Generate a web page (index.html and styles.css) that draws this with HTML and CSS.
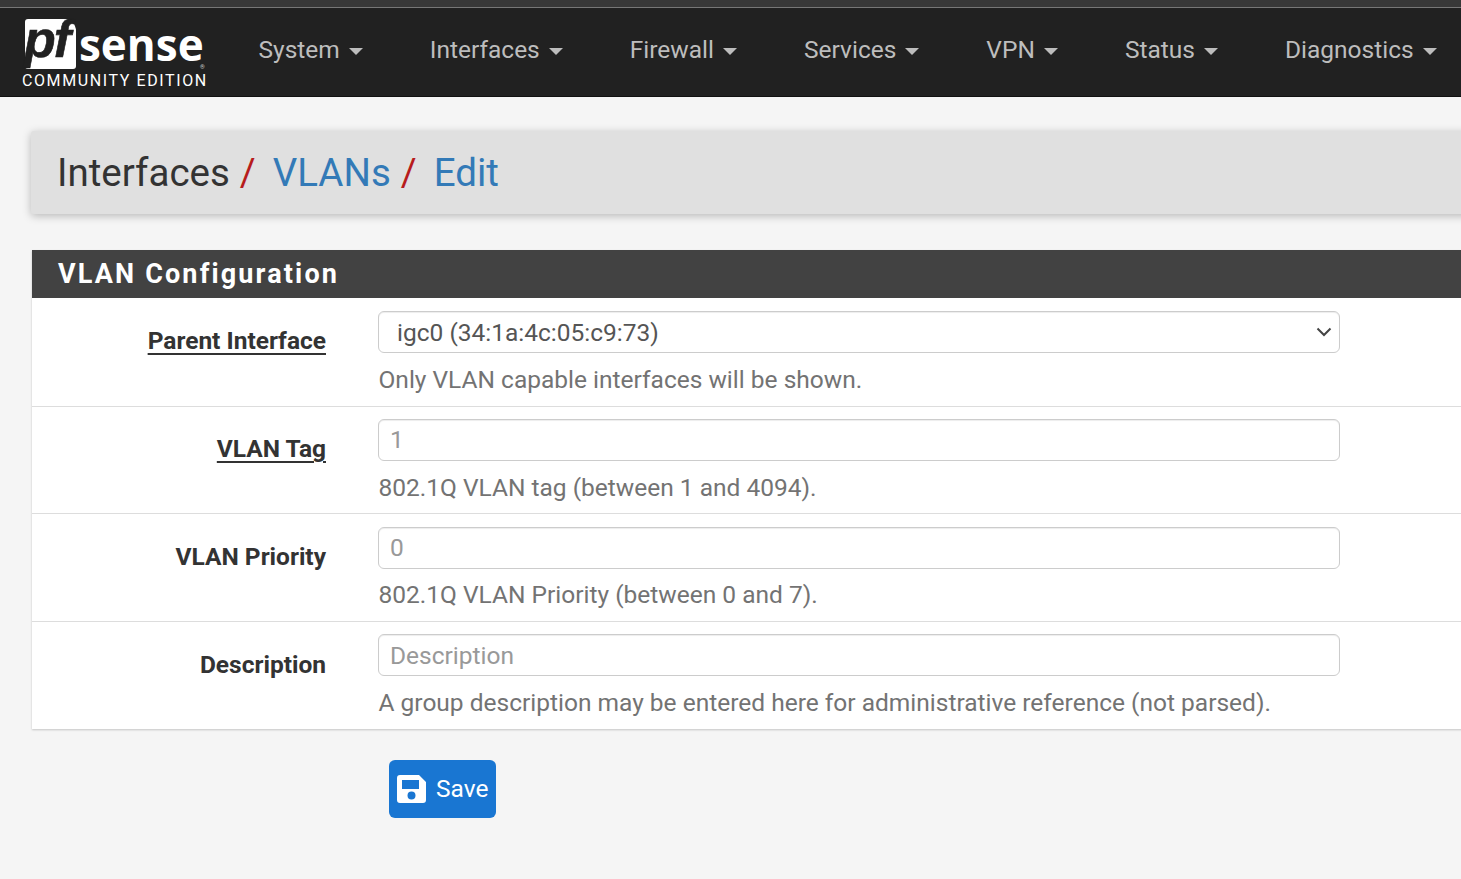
FILE: index.html
```html
<!DOCTYPE html>
<html lang="en">
<head>
<meta charset="utf-8">
<title>pfSense - Interfaces: VLANs: Edit</title>
<link rel="stylesheet" href="styles.css">
</head>
<body>
<div class="topstrip"></div>
<nav class="navbar">
  <a class="brand">
    <span class="logo-row"><span class="logo-pf"><span class="logo-pf-text">pf</span></span><span class="logo-sense">sense</span><span class="logo-reg">®</span></span>
    <span class="logo-edition">COMMUNITY EDITION</span>
  </a>
  <ul class="menu">
    <li>System<span class="caret"></span></li>
    <li>Interfaces<span class="caret"></span></li>
    <li>Firewall<span class="caret"></span></li>
    <li>Services<span class="caret"></span></li>
    <li>VPN<span class="caret"></span></li>
    <li>Status<span class="caret"></span></li>
    <li>Diagnostics<span class="caret"></span></li>
  </ul>
</nav>
<main class="content">
  <header class="crumbs">
    <span class="crumb">Interfaces</span><span class="sep">/</span>
    <a class="crumb link">VLANs</a><span class="sep">/</span>
    <a class="crumb link">Edit</a>
  </header>
  <section class="panel">
    <h2 class="panel-title">VLAN Configuration</h2>
    <div class="row">
      <label class="row-label required">Parent Interface</label>
      <div class="row-field">
        <div class="select">igc0 (34:1a:4c:05:c9:73)
          <svg class="chevron" viewBox="0 0 16 10" width="16" height="10"><path d="M1.5 1.5 8 8l6.500-6.500" fill="none" stroke="#444" stroke-width="2"/></svg>
        </div>
        <p class="help">Only VLAN capable interfaces will be shown.</p>
      </div>
    </div>
    <div class="row">
      <label class="row-label required">VLAN Tag</label>
      <div class="row-field">
        <input class="input" type="text" value="1">
        <p class="help">802.1Q VLAN tag (between 1 and 4094).</p>
      </div>
    </div>
    <div class="row">
      <label class="row-label">VLAN Priority</label>
      <div class="row-field">
        <input class="input" type="text" value="0">
        <p class="help">802.1Q VLAN Priority (between 0 and 7).</p>
      </div>
    </div>
    <div class="row">
      <label class="row-label">Description</label>
      <div class="row-field">
        <input class="input" type="text" placeholder="Description">
        <p class="help">A group description may be entered here for administrative reference (not parsed).</p>
      </div>
    </div>
  </section>
  <button class="save" type="button">
    <svg class="save-icon" viewBox="0 0 29 28" width="29" height="28"><path fill-rule="evenodd" fill="#fff" d="M3 0h19l7 7v18a3 3 0 0 1-3 3H3a3 3 0 0 1-3-3V3a3 3 0 0 1 3-3zM5 5v9h17V5zM14.500 16.500a4 4 0 1 0 0 8 4 4 0 0 0 0-8z"/></svg>
    Save
  </button>
</main>
</body>
</html>
```
FILE: styles.css
```css
* { box-sizing: border-box; }
html, body { margin: 0; padding: 0; height: 100%; overflow: hidden; }
body { background: #f5f5f5; font-family: Roboto, "Liberation Sans", sans-serif; color: #333; width: 1461px; }

.topstrip { height: 8px; background: #383838; border-bottom: 1px solid #777; }
.navbar { height: 89px; background: #212121; border-bottom: 1px solid #111; display: flex; align-items: flex-start; }
.brand { width: 258.500px; flex: none; padding: 11px 0 0 22px; display: flex; flex-direction: column; color: #fff; }
.logo-row { display: flex; align-items: flex-end; height: 50px; padding-left: 3px; position: relative; }
.logo-pf { width: 51px; height: 50px; background: #fff; color: #212121; border-radius: 3px 12px 3px 3px; position: relative; flex: none; }
.logo-pf-text { position: absolute; left: -1px; top: 0; font: italic 700 52px/40px "Liberation Sans", sans-serif; letter-spacing: -2px; -webkit-text-stroke: .6px #212121; }
.logo-sense { font: 700 44px/50px "Open Sans", sans-serif; color: #fff; letter-spacing: 0; margin-left: 3px; height: 50px; }
.logo-reg { position: absolute; left: 178px; top: 44px; font: 400 6px/7px Roboto, sans-serif; color: #ccc; }
.logo-edition { font: 400 16px/20px Roboto, sans-serif; letter-spacing: 1.6px; margin-top: 2px; white-space: nowrap; }
.menu { list-style: none; margin: 0; padding: 0; display: flex; gap: 67px; height: 83px; align-items: center; color: #bdbdbd; font-size: 24.500px; white-space: nowrap; }
.menu li { display: flex; align-items: center; }
.caret { display: inline-block; margin-left: 9px; margin-top: 3px; border-left: 7px solid transparent; border-right: 7px solid transparent; border-top: 7px solid #bdbdbd; }

.content { padding: 34px 0 0 31px; }
.crumbs { height: 83px; background: #e0e0e0; box-shadow: 0 2px 8px rgba(0,0,0,.25); border-radius: 3px 0 0 3px; display: flex; align-items: center; padding-left: 26px; font-size: 38.500px; margin-bottom: 36px; width: 1460px; }
.crumb { color: #333; }
.link { color: #337ab7; }
.sep { color: #b71c1c; margin: 0 17px 0 10px; }
.panel { margin-left: 1px; width: 1460px; background: #fff; box-shadow: 0 1px 2px rgba(0,0,0,.2); }
.panel-title { margin: 0 0 .9px; height: 48px; background: #424242; color: #fff; font-size: 27px; font-weight: 700; letter-spacing: 2.150px; line-height: 48px; padding-left: 26px; }
.row { display: flex; height: 107.700px; border-bottom: 1px solid #ddd; padding-top: 12.300px; }
.row:last-child { border-bottom: 0; height: 107px; }
.row-label { width: 294px; flex: none; text-align: right; font-size: 24.500px; font-weight: 700; line-height: 30px; padding-top: 15.300px; color: #333; }
.required { text-decoration: underline; text-underline-offset: 4px; text-decoration-thickness: 2px; }
.row-field { margin-left: 52px; width: 962px; flex: none; }
.select, .input { display: block; width: 962px; height: 42px; border: 1px solid #ccc; border-radius: 6px; background: #fff; font: 400 24.500px/40px Roboto, sans-serif; box-shadow: inset 0 1px 1px rgba(0,0,0,.075); outline: 0; }
.select { position: relative; padding: 1px 0 0 18px; color: #555; }
.input { padding: 0 11px; color: #999; }
.input::placeholder { color: #999; opacity: 1; }
.chevron { position: absolute; right: 7px; top: 15px; }
.help { margin: 8.800px 0 0 .5px; font-size: 24.500px; line-height: 35px; color: #737373; white-space: nowrap; }
.save { margin: 31px 0 0 358px; width: 107px; height: 58px; background: #1976d2; color: #fff; border: 0; border-radius: 6px; font: 400 24.500px/58px Roboto, sans-serif; display: flex; align-items: center; padding: 0 0 0 8px; gap: 10px; }
.save-icon { flex: none; }
```
